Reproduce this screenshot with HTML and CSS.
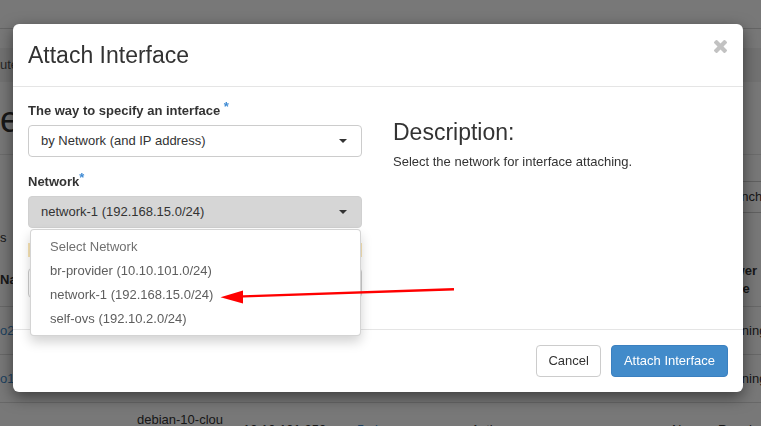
FILE: index.html
```html
<!DOCTYPE html>
<html>
<head>
<meta charset="utf-8">
<title>Attach Interface</title>
<link rel="stylesheet" href="styles.css">
</head>
<body>
<div class="page">
  <div class="navbar"></div>
  <div class="crumbs">ute / Instances</div>
  <div class="page-header"><h1 class="page-title">e</h1></div>
  <div class="actions"><button class="launch">Launch Instance</button></div>
  <div class="count">s</div>
  <div class="table">
    <div class="tr thead">
      <div class="c">Name</div><div class="c">Image Name</div><div class="c">IP Address</div><div class="c">Flavor</div><div class="c">Key Pair</div><div class="c">Status</div><div class="c">Availability Zone</div><div class="c">Task</div><div class="c power">Power State</div>
    </div>
    <div class="tr">
      <div class="c"><a class="link">o2</a></div><div class="c"></div><div class="c"></div><div class="c"></div><div class="c"></div><div class="c"></div><div class="c"></div><div class="c"></div><div class="c power">Running</div>
    </div>
    <div class="tr">
      <div class="c"><a class="link">o1</a></div><div class="c"></div><div class="c"></div><div class="c"></div><div class="c"></div><div class="c"></div><div class="c"></div><div class="c"></div><div class="c power">Running</div>
    </div>
    <div class="tr last">
      <div class="c low"></div><div class="c image">debian-10-cloud-amd64</div><div class="c low">10.10.101.250</div><div class="c low"><a class="link">5mi</a></div><div class="c low">-</div><div class="c low">Active</div><div class="c low">nova</div><div class="c low">None</div><div class="c low power">Running</div>
    </div>
  </div>
</div>

<div class="backdrop"></div>

<div class="modal">
  <div class="modal-header">
    <h3 class="modal-title">Attach Interface</h3>
    <svg class="close" viewBox="110 366 1188 1188" width="13" height="13" aria-label="Close"><path d="M1298 1322q0 40-28 68l-136 136q-28 28-68 28t-68-28l-294-294-294 294q-28 28-68 28t-68-28l-136-136q-28-28-28-68t28-68l294-294-294-294q-28-28-28-68t28-68l136-136q28-28 68-28t68 28l294 294 294-294q28-28 68-28t68 28l136 136q28 28 28 68t-28 68l-294 294 294 294q28 28 28 68z"/></svg>
  </div>
  <div class="modal-body">
    <div class="form-col">
      <div class="form-group">
        <div class="label">The way to specify an interface <span class="req">*</span></div>
        <div class="select"><span>by Network (and IP address)</span><span class="caret"></span></div>
      </div>
      <div class="form-group open">
        <div class="label">Network<span class="req">*</span></div>
        <div class="select active"><span>network-1 (192.168.15.0/24)</span><span class="caret"></span>
          <ul class="menu">
            <li class="placeholder">Select Network</li>
            <li>br-provider (10.10.101.0/24)</li>
            <li>network-1 (192.168.15.0/24)</li>
            <li>self-ovs (192.10.2.0/24)</li>
          </ul>
        </div>
      </div>
      <div class="hint"></div>
      <div class="input"></div>
    </div>
    <div class="desc-col">
      <h3 class="desc-title">Description:</h3>
      <p class="desc-text">Select the network for interface attaching.</p>
    </div>
  </div>
  <div class="modal-footer">
    <button class="btn btn-default">Cancel</button>
    <button class="btn btn-primary">Attach Interface</button>
  </div>
</div>

<svg class="annotation" width="761" height="426" viewBox="0 0 761 426">
  <line x1="454" y1="289.3" x2="236" y2="296.6" stroke="#ff0000" stroke-width="2.4"/>
  <polygon points="220.5,297.3 243,290.5 243,303.5" fill="#ff0000"/>
</svg>
</body>
</html>
```

FILE: styles.css
```css
* { box-sizing: border-box; }
html, body { margin: 0; height: 100%; overflow: hidden; }
body {
  font-family: "Liberation Sans", Arial, Helvetica, sans-serif;
  font-size: 13px;
  line-height: 18px;
  color: #333;
  background: #fff;
}

/* ---------- underlying page ---------- */
.page { width: 761px; }
.navbar { height: 29px; border-bottom: 1px solid #d6d6d6; background: #fff; }
.crumbs {
  margin-top: 19px; height: 34px; line-height: 34px;
  background: #f3f3f3; color: #555; white-space: nowrap;
}
.page-header { margin-top: 18px; padding-bottom: 14px; border-bottom: 1px solid #e5e5e5; }
.page-title { margin: 0; font-size: 36px; line-height: 40px; font-weight: 400; }
.actions { display: flex; justify-content: flex-end; margin-top: 26px; margin-right: -67px; }
.launch {
  height: 32px; padding: 0 12px; border: 1px solid #ccc; border-radius: 4px;
  background: #fff; color: #333; font: inherit; white-space: nowrap;
}
.count { margin-top: 16px; height: 18px; }
.table { margin-top: 7px; }
.tr {
  display: grid;
  grid-template-columns: 137px 106px 114px 60px 54px 63px 138px 46px 43px;
  align-items: center;
  height: 48px;
  border-bottom: 1px solid #ddd;
}
.tr.thead { height: 53px; padding: 8px 0; font-weight: 700; }
.tr.last { height: 60px; align-items: start; padding-top: 8px; border-bottom: 0; }
.c { white-space: nowrap; }
.c.power { white-space: normal; }
.tr:not(.thead) .c.power { white-space: nowrap; }
.c.image { white-space: normal; word-break: break-all; padding-right: 16px; }
.c.low { padding-top: 10px; }
.link { color: #428bca; }

/* ---------- backdrop ---------- */
.backdrop { position: fixed; inset: 0; background: rgba(0, 0, 0, 0.53); }

/* ---------- modal ---------- */
.modal {
  position: absolute; top: 24px; left: 13px; width: 730px;
  background: #fff; border-radius: 6px;
  box-shadow: 0 5px 15px rgba(0, 0, 0, 0.5);
}
.modal-header {
  display: flex; justify-content: space-between; align-items: flex-start;
  padding: 16px 15px 15px; border-bottom: 1px solid #e5e5e5;
}
.modal-title { margin: 0; font-size: 23px; line-height: 31px; font-weight: 400; color: #333; }
.close { fill: #c2c2c2; margin-right: 1px; }

.modal-body {
  display: grid; grid-template-columns: 334px 1fr; column-gap: 31px;
  padding: 15px;
}
.form-group { margin-bottom: 16px; }
.form-group.open { margin-bottom: 0; }
.label { font-weight: 700; line-height: 18px; margin-bottom: 5px; white-space: nowrap; }
.req { color: #3f8bd4; vertical-align: 4px; line-height: 0; font-weight: 700; }
.select {
  position: relative;
  display: flex; justify-content: space-between; align-items: center;
  height: 32px; padding: 0 14px 0 12px;
  border: 1px solid #ccc; border-radius: 4px; background: #fff;
}
.select.active { background: #d6d6d6; border-color: #d0d0d0; }
.caret {
  width: 0; height: 0;
  border-top: 4px solid #333; border-left: 4px solid transparent; border-right: 4px solid transparent;
}
.menu {
  position: absolute; top: calc(100% + 2px); left: 1px; right: 0;
  margin: 0; padding: 5px 0 4px; list-style: none;
  background: #fff; border: 1px solid rgba(0, 0, 0, 0.17); border-radius: 4px;
  box-shadow: 0 6px 12px rgba(0, 0, 0, 0.175);
  z-index: 2;
}
.menu li { padding: 0 19px; line-height: 24px; color: #5e5e5e; white-space: nowrap; }
.menu li.placeholder { color: #707070; }
.hint { margin-top: 15px; height: 14px; background: #f7e3b5; }
.input { margin-top: 11px; height: 30px; margin-bottom: 16px; border: 1px solid #ccc; border-radius: 4px; }

.desc-title { margin: 17px 0 0; font-size: 23px; line-height: 26px; font-weight: 400; color: #333; }
.desc-text { margin: 8px 0 0; line-height: 18px; }

.modal-footer {
  display: flex; justify-content: flex-end; gap: 10px;
  padding: 15px; border-top: 1px solid #e5e5e5;
}
.btn {
  height: 32px; padding: 0 12px; border-radius: 4px;
  font: inherit; font-size: 13px; cursor: pointer;
}
.btn-default { background: #fff; border: 1px solid #ccc; color: #333; padding: 0 11px; }
.btn-primary { background: #428bca; border: 1px solid #3b80c0; color: #fff; }

/* ---------- annotation arrow ---------- */
.annotation { position: fixed; left: 0; top: 0; pointer-events: none; z-index: 5; }
```
